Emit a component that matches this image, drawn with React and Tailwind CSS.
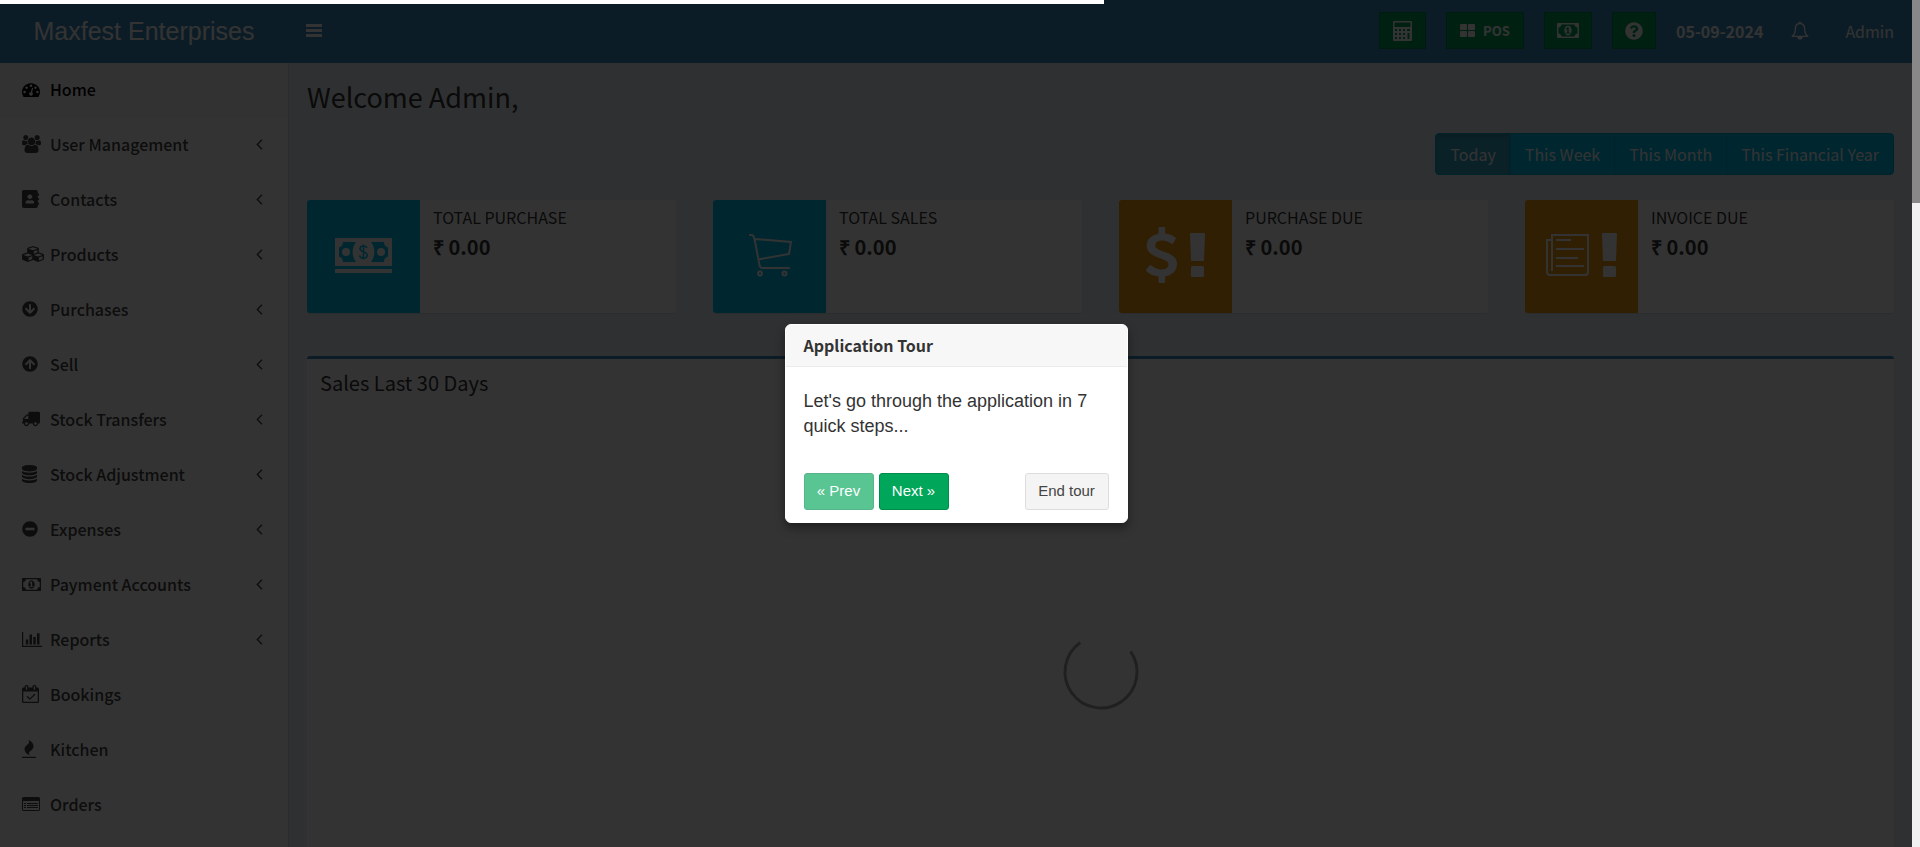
import {
  FaAddressBook,
  FaArrowCircleDown,
  FaArrowCircleUp,
  FaCubes,
  FaMinusCircle,
  FaQuestionCircle,
  FaTruck,
} from "react-icons/fa";

const PATHS = {
  home: {
    box: "0 128 1792 1536",
    d: "M384 1152q0-53-37.5-90.5t-90.5-37.5-90.5 37.5-37.5 90.5 37.5 90.5 90.5 37.5 90.5-37.5 37.5-90.5zm192-448q0-53-37.5-90.5t-90.5-37.5-90.5 37.5-37.5 90.5 37.5 90.5 90.5 37.5 90.5-37.5 37.5-90.5zm428 481l101-382q6-26-7.5-48.5t-38.5-29.5-48 6.500-30 39.5l-101 382q-60 5-107 43.5t-63 98.5q-20 77 20 146t117 89 146-20 89-117q16-60-6-117t-72-91zm660-33q0-53-37.5-90.5t-90.5-37.5-90.5 37.5-37.5 90.5 37.5 90.5 90.5 37.5 90.5-37.5 37.5-90.5zm-640-640q0-53-37.5-90.5t-90.5-37.5-90.5 37.5-37.5 90.5 37.5 90.5 90.5 37.5 90.5-37.5 37.5-90.5zm448 192q0-53-37.5-90.5t-90.5-37.5-90.5 37.5-37.5 90.5 37.5 90.5 90.5 37.5 90.5-37.5 37.5-90.5zm320 448q0 261-141 483-19 29-54 29h-1402q-35 0-54-29-141-221-141-483 0-182 71-348t191-286 286-191 348-71 348 71 286 191 191 286 71 348z",
  },
  users: {
    box: "0 0 1920 1792",
    d: "M593 896q-162 5-265 128h-134q-82 0-138-40.5t-56-118.5q0-353 124-353 6 0 43.5 21t97.5 42.5 119 21.5q67 0 133-23-5 37-5 66 0 139 81 256zm1071 637q0 120-73 189.5t-194 69.5h-874q-121 0-194-69.5t-73-189.5q0-53 3.5-103.5t14-109 26.5-108.5 43-97.5 62-81 85.5-53.5 111.5-20q10 0 43 21.5t73 48 107 48 135 21.5 135-21.5 107-48 73-48 43-21.5q61 0 111.5 20t85.5 53.5 62 81 43 97.5 26.5 108.5 14 109 3.5 103.5zm-1024-1277q0 106-75 181t-181 75-181-75-75-181 75-181 181-75 181 75 75 181zm704 384q0 159-112.5 271.5t-271.5 112.5-271.5-112.5-112.5-271.5 112.5-271.5 271.5-112.5 271.5 112.5 112.5 271.5zm576 225q0 78-56 118.5t-138 40.5h-134q-103-123-265-128 81-117 81-256 0-29-5-66 66 23 133 23 59 0 119-21.5t97.5-42.5 43.5-21q124 0 124 353zm-128-609q0 106-75 181t-181 75-181-75-75-181 75-181 181-75 181 75 75 181z",
  },
  database: {
    box: "128 0 1536 1792",
    d: "M896 768q237 0 443-43t325-127v170q0 69-103 128t-280 93.5-385 34.5-385-34.5-280-93.5-103-128v-170q119 84 325 127t443 43zm0 768q237 0 443-43t325-127v170q0 69-103 128t-280 93.5-385 34.5-385-34.5-280-93.5-103-128v-170q119 84 325 127t443 43zm0-384q237 0 443-43t325-127v170q0 69-103 128t-280 93.5-385 34.5-385-34.5-280-93.5-103-128v-170q119 84 325 127t443 43zm0-1152q208 0 385 34.5t280 93.5 103 128v128q0 69-103 128t-280 93.5-385 34.5-385-34.5-280-93.5-103-128v-128q0-69 103-128t280-93.5 385-34.5z",
  },
  money: {
    box: "0 256 1920 1280",
    d: "M768 1152h384v-96h-128v-448h-114l-148 137 77 80q42-37 55-57h2v288h-128v96zm512-256q0 70-21 142t-59.5 134-101.5 101-138 39-138-39-101.5-101-59.5-134-21-142 21-142 59.5-134 101.5-101 138-39 138 39 101.5 101 59.5 134 21 142zm512 256v-512q-106 0-181-75t-75-181h-1152q0 106-75 181t-181 75v512q106 0 181 75t75 181h1152q0-106 75-181t181-75zm128-832v1152q0 26-19 45t-45 19h-1792q-26 0-45-19t-19-45v-1152q0-26 19-45t45-19h1792q26 0 45 19t19 45z",
  },
  chart: {
    box: "0 128 2048 1536",
    d: "M640 896v512h-256v-512h256zm384-512v1024h-256v-1024h256zm1024 1152v128h-2048v-1536h128v1408h1920zm-640-896v768h-256v-768h256zm384-384v1152h-256v-1152h256z",
  },
  calendar: {
    box: "0 0 1664 1792",
    d: "M1303 964l-512 512q-10 9-23 9t-23-9l-288-288q-9-10-9-23t9-22l46-46q9-9 22-9t23 9l220 220 444-444q10-9 23-9t22 9l46 46q9 9 9 22t-9 23zm-1175 700h1408v-1024h-1408v1024zm384-1216v-288q0-14-9-23t-23-9h-64q-14 0-23 9t-9 23v288q0 14 9 23t23 9h64q14 0 23-9t9-23zm768 0v-288q0-14-9-23t-23-9h-64q-14 0-23 9t-9 23v288q0 14 9 23t23 9h64q14 0 23-9t9-23zm384-64v1280q0 52-38 90t-90 38h-1408q-52 0-90-38t-38-90v-1280q0-52 38-90t90-38h128v-96q0-66 47-113t113-47h64q66 0 113 47t47 113v96h384v-96q0-66 47-113t113-47h64q66 0 113 47t47 113v96h128q52 0 90 38t38 90z",
  },
  fire: {
    box: "192 0 1408 1792",
    d: "M1600 1696v64q0 13-9.5 22.5t-22.5 9.5h-1344q-13 0-22.5-9.5t-9.5-22.5v-64q0-13 9.5-22.5t22.5-9.5h1344q13 0 22.5 9.5t9.5 22.5zm-256-1056q0 78-24.5 144t-64 112.5-87.5 88-96 77.5-87.5 72-64 81.5-24.5 96.5q0 96 67 224l-4-1 1 1q-90-41-160-83t-138.5-100-113.5-122.5-72.5-150.5-27.5-184q0-78 24.5-144t64-112.5 87.5-88 96-77.5 87.5-72 64-81.5 24.5-96.5q0-94-66-224l3 1-1-1q90 41 160 83t138.5 100 113.5 122.5 72.5 150.5 27.5 184z",
  },
  dollar: {
    box: "430 0 932 1792",
    d: "M1362 1185q0 153-99.5 263.5t-258.5 136.5v175q0 14-9 23t-23 9h-135q-13 0-22.5-9.5t-9.5-22.5v-175q-66-9-127.5-31t-101.5-44.5-74-48-46.5-37.5-17.5-18q-17-21-2-41l103-135q7-10 23-12 15-2 24 9l2 2q113 99 243 125 37 8 74 8 81 0 142.5-43t61.5-122q0-28-15-53t-33.5-42-58.5-37.5-66-32-80-32.5q-39-16-61.5-25t-61.5-26.5-62.5-31-56.5-35.5-53.5-42.5-43.5-49-35.5-58-21-66.5-8.5-78q0-138 98-242t255-134v-180q0-13 9.5-22.5t22.5-9.5h135q14 0 23 9t9 23v176q57 6 110.5 23t87 33.5 63.5 37.5 39 29 15 14q17 18 5 38l-81 146q-8 15-23 16-14 3-27-7-3-3-14.5-12t-39-26.5-58.5-32-74.5-26-85.5-11.5q-95 0-155 43t-60 111q0 26 8.5 48t29.5 41.5 39.5 33 56 31 60.5 27 70 27.5q53 20 81 31.5t76 35 75.5 42.5 62 50 53 63.5 31.5 76.5 13 94z",
  },
};

function Glyph({ name, className }) {
  return (
    <svg viewBox={PATHS[name].box} preserveAspectRatio="none" fill="currentColor" className={className} aria-hidden="true">
      <path d={PATHS[name].d} />
    </svg>
  );
}

function ListIcon() {
  return (
    <svg viewBox="0 0 18 14" fill="currentColor" className="h-[14px] w-[18px]" aria-hidden="true">
      <path fillRule="evenodd" d="M1.500 0h15A1.500 1.500 0 0 1 18 1.500v11a1.500 1.500 0 0 1-1.500 1.500h-15A1.500 1.500 0 0 1 0 12.500v-11A1.500 1.500 0 0 1 1.500 0zM1 4v8.500a.5.5 0 0 0 .5.5h15a.5.5 0 0 0 .5-.5V4z" />
      <path d="M2 6h2v1H2zM5 6h11v1H5zM2 8h2v1H2zM5 8h11v1H5zM2 10h2v1H2zM5 10h11v1H5z" />
    </svg>
  );
}

function Chevron() {
  return (
    <svg viewBox="0 0 7 11" fill="none" stroke="currentColor" strokeWidth="1.4" className="h-[11px] w-[7px]" aria-hidden="true">
      <path d="M6 .8 1.300 5.500 6 10.200" />
    </svg>
  );
}

function CalculatorIcon() {
  return (
    <svg viewBox="0 0 19 20" fill="currentColor" className="h-5 w-[19px]" aria-hidden="true">
      <path
        fillRule="evenodd"
        d="M1 0h17a1 1 0 0 1 1 1v18a1 1 0 0 1-1 1H1a1 1 0 0 1-1-1V1a1 1 0 0 1 1-1zM1.500 1.500v4.500h16V1.500zM2 8v2h2V8zM6 8v2h2V8zM10 8v2h2V8zM14 8v2h3V8zM2 12v2h2v-2zM6 12v2h2v-2zM10 12v2h2v-2zM14.500 12v6h2v-6zM2 16v2h2v-2zM6 16v2h2v-2zM10 16v2h2v-2z"
      />
    </svg>
  );
}

function GridIcon() {
  return (
    <svg viewBox="0 0 15 13" fill="currentColor" className="h-[13px] w-[15px]" aria-hidden="true">
      <rect width="7" height="6" rx="1" />
      <rect x="8" width="7" height="6" rx="1" />
      <rect y="7" width="7" height="6" rx="1" />
      <rect x="8" y="7" width="7" height="6" rx="1" />
    </svg>
  );
}

function BellIcon() {
  return (
    <svg viewBox="0 0 18 20" className="h-5 w-[18px]" aria-hidden="true">
      <path d="M9 2.500C5.800 2.500 4.400 4.800 4.400 7.500c0 4-1 6.200-3.200 7.900h15.600c-2.200-1.700-3.200-3.900-3.200-7.900 0-2.700-1.400-5-4.600-5z" fill="none" stroke="currentColor" strokeWidth="1.300" strokeLinejoin="round" />
      <path d="M8 .8h2v2H8zM6.300 16h5.400c-.2 1.600-1.200 2.600-2.700 2.600S6.500 17.600 6.300 16z" fill="currentColor" />
    </svg>
  );
}

function BarsIcon() {
  return (
    <svg viewBox="0 0 16 13" fill="currentColor" className="h-[13px] w-4" aria-hidden="true">
      <path d="M0 0h16v3H0zM0 5h16v3H0zM0 10h16v3H0z" />
    </svg>
  );
}

function CashIcon() {
  return (
    <svg viewBox="0 0 57 35" fill="currentColor" className="h-[35px] w-[57px]" aria-hidden="true">
      <path fillRule="evenodd" d="M0 0h57v28H0zM8 4c0 3-1.500 5-4 5.500v9C6.500 19 8 21 8 24h13c-4.500-6-4.500-14 0-20zM36 4c4.500 6 4.500 14 0 20h13c0-3 1.500-5 4-5.500v-9C50.500 9 49 7 49 4z" />
      <circle cx="11" cy="14" r="4" />
      <circle cx="46" cy="14" r="4" />
      <path d="M0 31h57v4H0z" />
      <path d="M32 10c-.4-1.300-1.700-2-3.500-2-2 0-3.500 1-3.500 2.700 0 4 7.300 2.300 7.300 6.500 0 1.700-1.500 2.800-3.800 2.800-2.200 0-3.700-1-3.900-2.700M28.500 6.500v15" fill="none" stroke="#00c0ef" strokeWidth="1.500" />
    </svg>
  );
}

function CartIcon() {
  return (
    <svg viewBox="0 0 44 43" fill="none" stroke="currentColor" strokeWidth="2" className="h-[43px] w-11" aria-hidden="true">
      <path d="M1 1h2.500C5.500 1 6 2.500 6.500 5l5 26c.4 2.200 1.300 3 3 3H42M7 5l36 3-2 12-31 5.500" />
      <circle cx="12" cy="39.500" r="2" />
      <circle cx="36.500" cy="39.500" r="2" />
    </svg>
  );
}

function PaperIcon() {
  return (
    <svg viewBox="0 0 43 42" fill="none" stroke="currentColor" strokeWidth="2" className="h-[42px] w-[43px]" aria-hidden="true">
      <path d="M6 37V1h36v37c0 2-1 3-3 3H4c-2 0-3-1-3-3V6h4M10 6h15M10 15h28M10 24h22M10 32h28" />
    </svg>
  );
}

function ExclamationIcon() {
  return (
    <svg viewBox="0 0 15 44" fill="currentColor" className="h-11 w-[15px]" aria-hidden="true">
      <path d="M1 0h13a1 1 0 0 1 1 1l-1 26a1 1 0 0 1-1 1H2a1 1 0 0 1-1-1L0 1a1 1 0 0 1 1-1z" />
      <rect x="1" y="33" width="13" height="11" rx="1.500" />
    </svg>
  );
}

const MENU = [
  { label: "Home", icon: <Glyph name="home" className="h-[15px] w-[18px]" />, active: true },
  { label: "User Management", icon: <Glyph name="users" className="h-[18px] w-[19px]" />, sub: true },
  { label: "Contacts", icon: <FaAddressBook className="h-[18px] w-[17px]" preserveAspectRatio="none" />, sub: true },
  { label: "Products", icon: <FaCubes className="h-[18px] w-[22px]" preserveAspectRatio="none" />, sub: true },
  { label: "Purchases", icon: <FaArrowCircleDown className="size-4" />, sub: true },
  { label: "Sell", icon: <FaArrowCircleUp className="size-4" />, sub: true },
  { label: "Stock Transfers", icon: <FaTruck className="size-[18px] -scale-x-100" />, sub: true },
  { label: "Stock Adjustment", icon: <Glyph name="database" className="h-[18px] w-[15px]" />, sub: true },
  { label: "Expenses", icon: <FaMinusCircle className="size-4" />, sub: true },
  { label: "Payment Accounts", icon: <Glyph name="money" className="h-[13px] w-[19px]" />, sub: true },
  { label: "Reports", icon: <Glyph name="chart" className="h-[15px] w-5" />, sub: true },
  { label: "Bookings", icon: <Glyph name="calendar" className="h-[18px] w-[17px]" /> },
  { label: "Kitchen", icon: <Glyph name="fire" className="h-[18px] w-[14px]" /> },
  { label: "Orders", icon: <ListIcon /> },
];

const STATS = [
  { label: "TOTAL PURCHASE", color: "bg-[#00c0ef]", icon: <CashIcon /> },
  { label: "TOTAL SALES", color: "bg-[#00c0ef]", icon: <CartIcon /> },
  {
    label: "PURCHASE DUE",
    color: "bg-[#f39c12]",
    icon: (
      <>
        <Glyph name="dollar" className="h-14 w-[31px]" />
        <ExclamationIcon />
      </>
    ),
  },
  {
    label: "INVOICE DUE",
    color: "bg-[#f39c12]",
    icon: (
      <>
        <PaperIcon />
        <ExclamationIcon />
      </>
    ),
  },
];

const RANGES = ["Today", "This Week", "This Month", "This Financial Year"];

const headerButton =
  "flex h-[37px] items-center justify-center border border-[#008d4c] bg-[#00a65a] text-white";

function Header() {
  return (
    <header className="flex h-[63px] shrink-0 items-center bg-[#3c8dbc] pb-[2px] text-white">
      <a href="#home" className="w-72 shrink-0 text-center font-['Liberation_Sans',sans-serif] text-[25px] leading-8">
        Maxfest Enterprises
      </a>
      <button type="button" aria-label="Toggle navigation" className="ml-[18px]">
        <BarsIcon />
      </button>
      <div className="ml-auto flex items-center gap-5 pr-[18px]">
        <button type="button" aria-label="Calculator" className={`${headerButton} w-[47px]`}>
          <CalculatorIcon />
        </button>
        <button type="button" className={`${headerButton} w-[78px] gap-2 text-[13px] font-bold`}>
          <GridIcon />
          POS
        </button>
        <button type="button" aria-label="Today's profit" className={`${headerButton} w-12`}>
          <Glyph name="money" className="h-[15px] w-[22px]" />
        </button>
        <button type="button" aria-label="Help" className={`${headerButton} w-11`}>
          <FaQuestionCircle className="size-[18px]" />
        </button>
        <strong className="text-base leading-6 font-bold">05-09-2024</strong>
        <button type="button" aria-label="Notifications" className="ml-2">
          <BellIcon />
        </button>
        <a href="#profile" className="ml-4 text-base leading-6">
          Admin
        </a>
      </div>
    </header>
  );
}

function Sidebar() {
  return (
    <nav aria-label="Main" className="w-[289px] shrink-0 border-r border-[#d2d6de] bg-white">
      <ul>
        {MENU.map((item) => (
          <li key={item.label}>
            <a
              href="#menu"
              className={`flex h-[55px] items-center pr-[25px] pb-[3px] pl-[22px] text-base font-medium ${
                item.active ? "bg-[#f9f9f9] text-black" : "text-[#444]"
              }`}
            >
              <span className="w-7 shrink-0">{item.icon}</span>
              <span className="grow">{item.label}</span>
              {item.sub && <Chevron />}
            </a>
          </li>
        ))}
      </ul>
    </nav>
  );
}

function StatCard({ stat }) {
  return (
    <article className="flex h-[113px] overflow-hidden rounded-[3px] bg-white shadow-[0_1px_1px_rgba(0,0,0,0.1)]">
      <div className={`flex w-[113px] shrink-0 items-center justify-center gap-[13px] pb-[3px] text-white ${stat.color}`}>
        {stat.icon}
      </div>
      <div className="px-[13px] pt-[5px] text-[#333]">
        <h2 className="text-base leading-6 font-normal">{stat.label}</h2>
        <p className="mt-1 text-[20px] leading-7 font-bold">₹ 0.00</p>
      </div>
    </article>
  );
}

function Dashboard() {
  return (
    <main className="flex min-w-0 grow flex-col bg-[#ecf0f5] px-[18px] pt-[17px] text-[#333]">
      <h1 className="text-[27px] leading-[34px] font-normal">Welcome Admin,</h1>
      <div className="mt-[19px] flex shrink-0 self-end overflow-hidden rounded-[4px] border border-[#00acd6] bg-[#00c0ef]">
        {RANGES.map((range, i) => (
          <button
            key={range}
            type="button"
            className={`h-10 px-[14px] text-base font-normal text-white ${
              i === 0 ? "bg-[#31a5c4] shadow-[inset_0_3px_5px_rgba(0,0,0,0.125)]" : "border-l border-[#00acd6]"
            }`}
          >
            {range}
          </button>
        ))}
      </div>
      <div className="mt-[25px] grid shrink-0 grid-cols-4 gap-[37px]">
        {STATS.map((stat) => (
          <StatCard key={stat.label} stat={stat} />
        ))}
      </div>
      <section className="mt-[43px] grow rounded-t-[3px] border-t-[3px] border-[#3c8dbc] bg-white">
        <h2 className="px-[13px] pt-[10px] text-[20px] leading-7">Sales Last 30 Days</h2>
        <div className="flex h-[550px] items-center justify-center">
          <svg viewBox="0 0 76 76" fill="none" stroke="#a0a0a0" strokeWidth="3" className="size-[76px] rotate-10" role="img" aria-label="Loading">
            <path d="M12.500 12.500a36 36 0 1 0 51 0" />
          </svg>
        </div>
      </section>
    </main>
  );
}

function TourDialog() {
  const base = "h-[37px] rounded-[3px] border text-[15px]";
  return (
    <div
      role="dialog"
      aria-labelledby="tour-title"
      className="w-[343px] overflow-hidden rounded-md border border-white bg-white text-[#333] shadow-[0_5px_10px_rgba(0,0,0,0.4)]"
    >
      <h3 id="tour-title" className="border-b border-[#ebebeb] bg-[#f7f7f7] px-[18px] py-2 text-base leading-[25px] font-bold">
        Application Tour
      </h3>
      <div className="px-[18px] pt-[22px] pb-3 font-['Liberation_Sans',sans-serif]">
        <p className="text-[18px] leading-[25px]">Let&apos;s go through the application in 7 quick steps...</p>
        <div className="mt-[34px] flex gap-[5px]">
          <button type="button" disabled className={`${base} w-[70px] border-[#008d4c] bg-[#00a65a] text-white opacity-65`}>
            « Prev
          </button>
          <button type="button" className={`${base} w-[70px] border-[#008d4c] bg-[#00a65a] text-white`}>
            Next »
          </button>
          <button type="button" className={`${base} ml-auto w-[84px] border-[#ddd] bg-[#f4f4f4] text-[#444]`}>
            End tour
          </button>
        </div>
      </div>
    </div>
  );
}

export default function App() {
  return (
    <div className="flex h-screen overflow-hidden bg-[#ecf0f5] font-['Noto_Sans_CJK_SC',sans-serif]">
      <div className="relative flex min-w-0 grow flex-col">
        <Header />
        <div className="flex min-h-0 grow">
          <Sidebar />
          <Dashboard />
        </div>
        <div className="absolute inset-0 flex items-center justify-center bg-black/80">
          <TourDialog />
        </div>
        <div role="progressbar" aria-label="Page loading" className="absolute top-0 left-0 h-1 w-[1104px] bg-white" />
      </div>
      <div className="w-2 shrink-0 bg-[#f1f1f1]">
        <div className="h-[203px] bg-[#888]" />
      </div>
    </div>
  );
}
